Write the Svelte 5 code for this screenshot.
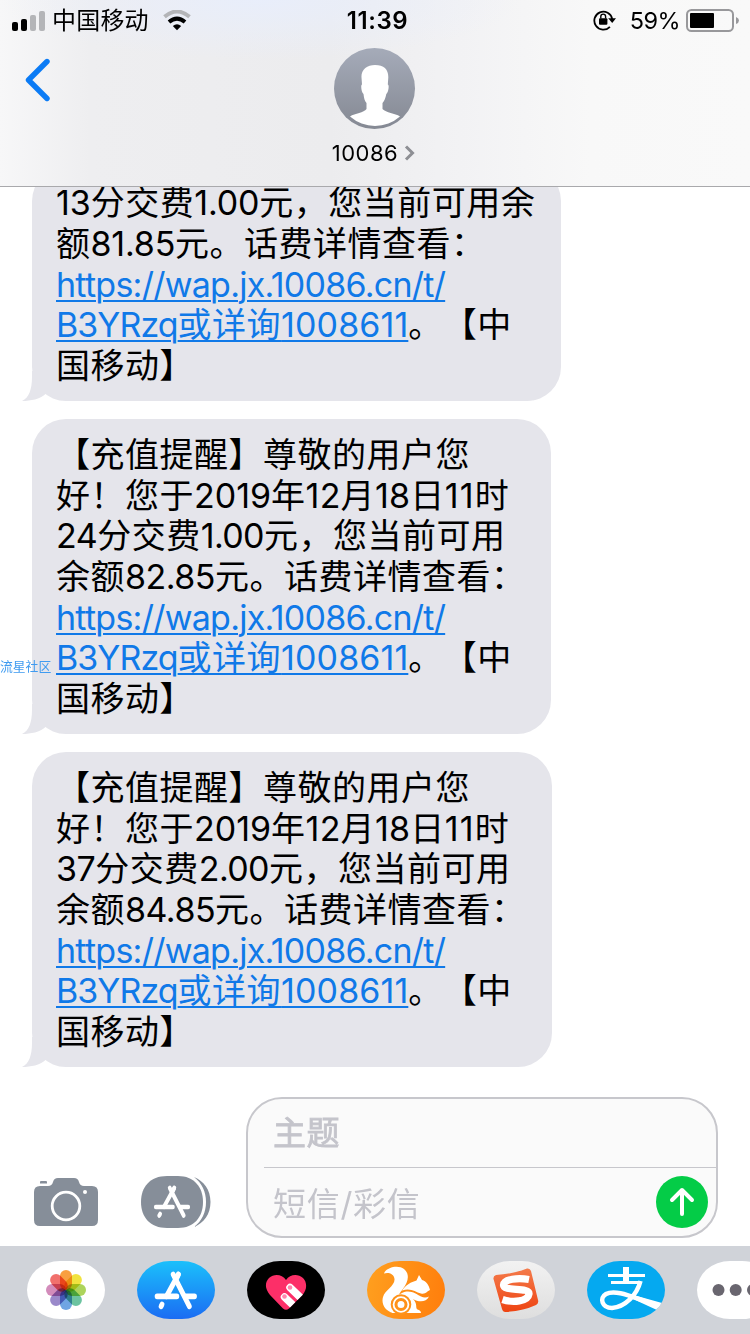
<script lang="ts">
  interface Part {
    text: string
    link?: boolean
    // letter spacing in px
    track?: number
  }

  interface Message {
    id: number
    width: number
    lines: Part[][]
  }

  const CJK = 0.5

  const linkLines: Part[][] = [
    [{ text: 'https://wap.jx.10086.cn/t/', link: true, track: -0.74 }],
    [
      { text: 'B3YRzq', link: true, track: -0.95 },
      { text: '或详询', link: true },
      { text: '1008611', link: true, track: 0.1 },
      { text: '。【中' }
    ],
    [{ text: '国移动】' }]
  ]

  function recharge(minute: string, amount: string, balance: string): Part[][] {
    return [
      [{ text: '【充值提醒】尊敬的用户您' }],
      [
        { text: '好！您于' },
        { text: '2019', track: 0 },
        { text: '年' },
        { text: '12', track: 0.2 },
        { text: '月' },
        { text: '18', track: 0.2 },
        { text: '日' },
        { text: '11', track: 1.1 },
        { text: '时' }
      ],
      [
        { text: minute, track: -0.5 },
        { text: '分交费' },
        { text: amount, track: -0.6 },
        { text: '元，您当前可用' }
      ],
      [
        { text: '余额' },
        { text: balance, track: -0.5 },
        { text: '元。话费详情查看：' }
      ],
      ...linkLines
    ]
  }

  const messages: Message[] = [
    {
      id: 1,
      width: 529,
      lines: [
        [
          { text: '13', track: 0 },
          { text: '分交费' },
          { text: '1.00', track: -0.2 },
          { text: '元，您当前可用余' }
        ],
        [
          { text: '额' },
          { text: '81.85', track: -0.2 },
          { text: '元。话费详情查看：' }
        ],
        ...linkLines
      ]
    },
    { id: 2, width: 519, lines: recharge('24', '1.00', '82.85') },
    { id: 3, width: 520, lines: recharge('37', '2.00', '84.85') }
  ]

  const petals = ['#f9952b', '#f0e02a', '#a4d04a', '#5cbd96', '#5f9be0', '#8f7cc4', '#cf7fb4', '#f0605c']
</script>

{#snippet storeGlyph()}
  <g fill="none" stroke="#fff" stroke-linecap="round">
    <path d="M22.5 12.5 L19.8 17.5 M17.5 12.5 L33 38" />
    <path d="M22.5 12.5 L11 30" />
    <path d="M2 30 H21 M29.5 30 H38 M6.8 36.5 L5.8 38" />
  </g>
{/snippet}

<div class="screen">
  <header class="header">
    <div class="status">
      <div class="status-left">
        <svg class="signal" width="34" height="21" viewBox="0 0 34 21">
          <rect x="0" y="12" width="6" height="9" rx="2" />
          <rect x="9" y="9" width="6" height="12" rx="2" />
          <rect x="18" y="5" width="6" height="16" rx="2" fill="#b4b5b8" />
          <rect x="27" y="1" width="6" height="20" rx="2" fill="#b4b5b8" />
        </svg>
        <span class="carrier">中国移动</span>
        <svg class="wifi" width="28" height="21" viewBox="0 0 28 21">
          <path d="M1.5 6.8 Q14 -3.7 26.5 6.8" fill="none" stroke="#b4b5b8" stroke-width="4" />
          <path d="M6 12 Q14 5.2 22 12" fill="none" stroke="#000" stroke-width="4" />
          <path d="M9.8 16 Q14 12.4 18.2 16 L14 20.3 Z" />
        </svg>
      </div>
      <span class="clock">11:39</span>
      <div class="status-right">
        <svg class="lock" width="24" height="22" viewBox="0 0 24 22">
          <path
            d="M16.9 17.8 A9 9 0 1 1 19.2 10"
            fill="none"
            stroke="#000"
            stroke-width="1.8"
          />
          <path d="M15.2 9.3 H23 L19.2 14 Z" />
          <rect x="6" y="9.3" width="8.4" height="6.5" rx="1" />
          <path d="M7.8 9.5 V7.5 a2.4 2.4 0 0 1 4.8 0 V9.5" fill="none" stroke="#000" stroke-width="1.4" />
        </svg>
        <span class="percent">59%</span>
        <svg width="53" height="23" viewBox="0 0 53 23">
          <rect x="1" y="1" width="46" height="21" rx="4.5" fill="none" stroke="#98989b" stroke-width="2" />
          <rect x="4" y="4" width="24" height="15" rx="1" />
          <path d="M50 8 q3 1.2 3 3.5 t-3 3.5 Z" fill="#98989b" />
        </svg>
      </div>
    </div>

    <div class="nav">
      <button type="button" class="back" aria-label="返回">
        <svg width="26" height="44" viewBox="0 0 26 44">
          <path d="M23 3.5 L4.5 22 L23 40.5" />
        </svg>
      </button>
      <div class="contact">
        <svg width="82" height="82" viewBox="0 0 82 82">
          <defs>
            <linearGradient id="avatar" x1="0" y1="0" x2="0" y2="1">
              <stop offset="0" stop-color="#a5abb9" />
              <stop offset="1" stop-color="#858993" />
            </linearGradient>
          </defs>
          <circle cx="40.5" cy="40.5" r="40.5" fill="url(#avatar)" />
          <path
            d="M41 17 C50 17 54.5 21.5 54.3 29.5 L53.8 36.5 C55.5 36.5 54.5 44.5 52.3 46 C51.5 50 50.5 53 48.5 55 V61 C52 65 61 65 66 68.5 A38 38 0 0 1 16 68.5 C21 65 30 65 32.5 61 V55 C30.5 53 30 50 29.5 46 C27.3 44.5 26.5 36.5 28 36.5 L27.5 29.5 C27 21.5 33 17 41 17 Z"
            fill="#fff"
          />
        </svg>
        <div class="contact-name">
          <span>10086</span>
          <svg width="11" height="18" viewBox="0 0 11 18">
            <path d="M2 2.5 L8.5 9 L2 15.5" />
          </svg>
        </div>
      </div>
    </div>
  </header>

  <main class="messages">
    {#each messages as message (message.id)}
      <div class="bubble" style:width="{message.width}px">
        {#each message.lines as line}
          <div class="line">
            {#each line as part}<span
                class:link={part.link}
                style:letter-spacing="{part.track ?? CJK}px">{part.text}</span
              >{/each}
          </div>
        {/each}
        <svg class="tail" width="30" height="30" viewBox="0 0 30 30">
          <path d="M10 0 V6 C10 18 7 27 0 30 C9 30 18 28 23.5 23 L30 16 V0 Z" />
        </svg>
      </div>
    {/each}
  </main>

  <section class="composer">
    <svg class="camera" width="64" height="48" viewBox="0 0 64 48">
      <path
        d="M6 8 H14 Q18 8 19 4 Q20 0 24 0 H40 Q44 0 45 4 Q46 8 50 8 H58 Q64 8 64 14 V42 Q64 48 58 48 H6 Q0 48 0 42 V14 Q0 8 6 8 Z M6 5.5 V4 Q6 3 7 3 H12 Q13 3 13 4 V5.5 Z"
        fill="#868e99"
      />
      <circle cx="32" cy="28" r="13.8" fill="none" stroke="#fff" stroke-width="2.8" />
      <circle cx="51" cy="14" r="2" fill="#fff" />
    </svg>
    <svg class="store" width="70" height="52" viewBox="0 0 70 52">
      <path d="M53 1 C63 5 69.5 14 69.5 26 S63 47 53 51 C61 45 65 36 65 26 S61 7 53 1 Z" fill="#868e99" />
      <path d="M26 0 H37 C53 0 62 11 62 26 S53 52 37 52 H26 C9 52 0 41 0 26 S9 0 26 0 Z" fill="#868e99" />
      <g transform="translate(13 -1.5) scale(0.9 1.08)" stroke-width="4.2">{@render storeGlyph()}</g>
    </svg>
    <div class="fields">
      <div class="field subject">主题</div>
      <div class="field body">
        <span>短信/彩信</span>
        <button type="button" class="send" aria-label="发送">
          <svg width="52" height="52" viewBox="0 0 52 52">
            <path d="M26 38 V14 M16 24 L26 14 L36 24" />
          </svg>
        </button>
      </div>
    </div>
  </section>

  <footer class="drawer">
    <div class="app photos">
      <svg width="78" height="58" viewBox="0 0 78 58">
        {#each petals as color, i}
          <rect
            class="petal"
            x="33"
            y="9"
            width="12"
            height="20"
            rx="6"
            fill={color}
            transform="rotate({i * 45} 39 29)"
          />
        {/each}
      </svg>
    </div>
    <div class="app appstore">
      <svg width="78" height="58" viewBox="0 0 78 58">
        <g transform="translate(18 -2.2) scale(1.04 1.25)" stroke-width="4.6">
          {@render storeGlyph()}
        </g>
      </svg>
    </div>
    <div class="app heart">
      <svg width="78" height="58" viewBox="0 0 78 58">
        <clipPath id="heart">
          <path d="M39 19 C43 13 51 12.5 56 17 C60.5 21.5 60 29 55.5 34 L42 47.5 Q39 50 36 47.5 L23 34 C18 28 17.5 21.5 22 17 C27 12.5 35 13 39 19 Z" />
        </clipPath>
        <g clip-path="url(#heart)">
          <rect width="78" height="58" fill="#fc2f68" />
          <path d="M37.5 36 L51 49 M43 26.5 L57 40" stroke="#fff" stroke-width="7.5" stroke-linecap="round" />
          <circle cx="37.5" cy="35.5" r="2.3" fill="#ff86ad" />
          <circle cx="43" cy="26.5" r="2.3" fill="#ff86ad" />
        </g>
      </svg>
    </div>
    <div class="divider"></div>
    <div class="app uc">
      <svg width="78" height="58" viewBox="0 0 78 58">
        <g fill="#fff">
          <path d="M17 12.5 C19 6.5 31 3.5 37 8 C44 14 40 22 36.5 27 C34 31 31 33 31.5 37 C27 40 25 45 26 52 C18 50 14 43 16 36 C18 29 28 25 27.5 18 C27 12.5 21 11 17 12.5 Z" />
          <path d="M52 14 L55 19 C59 20 62 24 63 29 C60 30 59 33.5 54 32.5 C48 31 44 26.5 35 29.5 C39 24 44 21 49.5 19.5 Z" />
          <path d="M35 32 C43 28 49 33 54 35.5 C57 37 60 36.5 62 35.5 C59 42 51 41 46 38 C51 43 48 47 50.5 48.5 C52.5 49 54 50 54 52 H25 C24 44 27 35 35 32 Z" />
        </g>
        <circle cx="34" cy="43.5" r="9.3" fill="#fff" stroke="#ff9219" stroke-width="2" />
        <circle cx="34" cy="43.5" r="5" fill="#fff" stroke="#ff9219" stroke-width="3" />
      </svg>
    </div>
    <div class="app sogou">
      <svg width="78" height="58" viewBox="0 0 78 58">
        <defs>
          <linearGradient id="sogou" x1="0" y1="0" x2="0" y2="1">
            <stop offset="0" stop-color="#f47b4b" />
            <stop offset="1" stop-color="#ee4412" />
          </linearGradient>
        </defs>
        <path d="M19 14 Q36 13 50 7.5 Q53 7 54 10 L61 39 Q62 42 59 44 Q46 50 29 51 Q26 51.5 25 48 L16.5 18 Q16 15 19 14 Z" fill="url(#sogou)" />
        <path
          d="M52 18.5 C41 16.5 27 18 26.5 24 C26 31 53 25.5 52 33 C51 40.5 36 42 25.5 38.5"
          fill="none"
          stroke="#fff"
          stroke-width="7.2"
        />
      </svg>
    </div>
    <div class="app alipay">
      <svg width="78" height="58" viewBox="0 0 78 58">
        <g fill="none" stroke="#fff">
          <path d="M39 6 V21" stroke-width="6" />
          <path d="M21 14.5 H58 M24 21.5 H53" stroke-width="3" />
          <path d="M53.5 20 C50 34 38 46 25 47 C15 47 12 37 19 33 C30 27 51 39 74 45" stroke-width="4.5" />
        </g>
        <path d="M50 35 L75 42 L71 49.5 L46 38 Z" fill="#fff" />
      </svg>
    </div>
    <div class="app more">
      <svg width="78" height="58" viewBox="0 0 78 58">
        <circle cx="21.5" cy="29" r="6" />
        <circle cx="38.7" cy="29" r="6" />
        <circle cx="56" cy="29" r="6" />
      </svg>
    </div>
  </footer>

  <span class="watermark">流星社区</span>
</div>

<style>
  :global(body) {
    background: #fff;
  }

  .screen {
    position: relative;
    display: flex;
    flex-direction: column;
    width: 750px;
    height: 1334px;
    overflow: hidden;
    background: #fff;
    color: #000;
    font-family: Inter, 'Noto Sans CJK SC', sans-serif;
    text-spacing-trim: space-all;
  }

  button {
    display: flex;
    padding: 0;
    border: none;
    background: none;
  }

  svg {
    display: block;
    flex: none;
  }

  .header {
    flex: none;
    box-sizing: border-box;
    height: 187px;
    border-bottom: 1px solid #a9a9ac;
    background:
      radial-gradient(ellipse 260px 60px at 260px 0, rgba(232, 238, 252, 0.9), transparent),
      linear-gradient(90deg, #f7f7f8 0, #eeeef0 90px, #ececee 330px, #f2f2f4 460px, #f8f8f8 590px, #f9f9f9 100%);
  }

  .status {
    display: grid;
    grid-template-columns: 1fr auto 1fr;
    align-items: center;
    height: 41px;
    padding: 0 11px 0 12px;
  }

  .status-left,
  .status-right {
    display: flex;
    align-items: center;
  }

  .status-right {
    justify-content: flex-end;
  }

  .carrier {
    margin-left: 6px;
    padding-top: 1px;
    font-size: 24px;
    line-height: 40px;
    letter-spacing: 0.2px;
  }

  .wifi {
    margin-left: 14px;
  }

  .clock {
    padding-left: 4px;
    font-size: 24px;
    font-weight: 600;
    letter-spacing: 0.6px;
  }

  .lock {
    margin-top: -1px;
  }

  .percent {
    margin: 0 6px 0 13px;
    font-size: 23.5px;
    letter-spacing: -0.6px;
  }

  .nav {
    display: grid;
    grid-template-columns: 1fr auto 1fr;
    padding: 7px 0 0 24px;
  }

  .back {
    align-self: start;
    margin-top: 10px;
  }

  .back path {
    fill: none;
    stroke: #0b7bf5;
    stroke-width: 5.4;
    stroke-linecap: round;
    stroke-linejoin: round;
  }

  .contact {
    display: flex;
    flex-direction: column;
    align-items: center;
    margin-right: 24px;
  }

  .contact-name {
    display: flex;
    align-items: center;
    gap: 6px;
    margin: 8px 3px 0 0;
    font-size: 22px;
    line-height: 30px;
    letter-spacing: 0.5px;
  }

  .contact-name path {
    fill: none;
    stroke: #8e8f94;
    stroke-width: 3;
  }

  .messages {
    display: flex;
    flex: 1;
    flex-direction: column;
    justify-content: flex-end;
    gap: 18px;
    min-height: 0;
    padding: 0 0 30px 32px;
    overflow: hidden;
  }

  .bubble {
    position: relative;
    flex: none;
    box-sizing: border-box;
    padding: 16px 0 14.5px 24px;
    border-radius: 34px;
    background: #e5e5eb;
  }

  .line {
    height: 40.65px;
    font-size: 34px;
    line-height: 40.65px;
    white-space: nowrap;
  }

  .link {
    color: #1079e8;
    text-decoration: underline;
    text-decoration-thickness: 2px;
    text-underline-offset: 3px;
  }

  .tail {
    position: absolute;
    bottom: 0;
    left: -10px;
    fill: #e5e5eb;
  }

  .composer {
    display: flex;
    flex: none;
    align-items: flex-end;
    padding: 0 32px 8px 34px;
  }

  .camera {
    margin-bottom: 12px;
  }

  .store {
    margin: 0 35px 10px 43px;
  }

  .fields {
    flex: 1;
    box-sizing: border-box;
    height: 141px;
    border: 2px solid #c7c7cc;
    border-radius: 36px;
    background: #fafafa;
    color: #c4c4cb;
    font-size: 33px;
  }

  .field {
    display: flex;
    align-items: center;
    box-sizing: border-box;
    height: 69px;
    padding-left: 9px;
    margin-left: 16px;
  }

  .subject {
    padding-bottom: 4px;
    border-bottom: 1px solid #c7c7cc;
    letter-spacing: 0.5px;
    -webkit-text-stroke: 0.8px #c4c4cb;
  }

  .body {
    justify-content: space-between;
    height: 67px;
    padding-right: 8px;
    letter-spacing: 0.7px;
  }

  .send {
    border-radius: 50%;
    background: #04cc47;
  }

  .send path {
    fill: none;
    stroke: #fff;
    stroke-width: 4;
    stroke-linecap: round;
    stroke-linejoin: round;
  }

  .drawer {
    display: flex;
    flex: none;
    align-items: center;
    gap: 32px;
    box-sizing: border-box;
    height: 88px;
    padding-left: 27px;
    background: #d0d3d9;
  }

  .app {
    flex: none;
    width: 78px;
    height: 58px;
    border-radius: 33px / 29px;
    overflow: hidden;
  }

  .photos,
  .more {
    background: #fff;
  }

  .petal {
    mix-blend-mode: multiply;
    opacity: 0.9;
  }

  .appstore {
    background: linear-gradient(#1bc0fb, #1b6cf3);
  }

  .heart {
    background: #000;
  }

  .divider {
    width: 2px;
    height: 50px;
    margin: 0 -10px 0 -12px;
    background: #b3b6bc;
  }

  .uc {
    background: linear-gradient(100deg, #ffa01f, #ff7d0c);
  }

  .sogou {
    background: linear-gradient(#f2f2f2, #dedede);
  }

  .alipay {
    background: #05a9f0;
  }

  .more svg {
    fill: #69666f;
  }

  .watermark {
    position: absolute;
    top: 658px;
    left: 0;
    color: #3f9bf0;
    font-size: 12.8px;
    line-height: 18px;
  }
</style>
